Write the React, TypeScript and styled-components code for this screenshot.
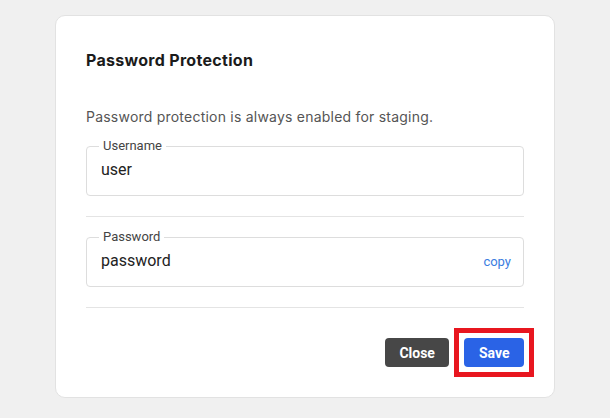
import React from "react";
import styled, { createGlobalStyle } from "styled-components";

const GlobalStyle = createGlobalStyle`
  * { box-sizing: border-box; }
  html, body {
    margin: 0;
    padding: 0;
    background: #f0f0f0;
    font-family: Roboto, "Noto Sans", Arial, sans-serif;
  }
`;

const Page = styled.div`
  padding: 15px 0 0 55px;
`;

const Card = styled.div`
  width: 500px;
  background: #ffffff;
  border: 1px solid #e2e2e2;
  border-radius: 10px;
  padding: 30px;
  display: flex;
  flex-direction: column;
`;

const Title = styled.h2`
  margin: 0;
  font-family: Inter, Roboto, sans-serif;
  font-size: 16px;
  line-height: 28px;
  font-weight: 700;
  letter-spacing: 0.3px;
  color: #1b1b1b;
`;

const Description = styled.p`
  margin: 33px 0 0;
  font-family: Inter, Roboto, sans-serif;
  font-size: 14px;
  line-height: 20px;
  letter-spacing: 0.22px;
  color: #555555;
`;

const Field = styled.fieldset<{ $first?: boolean }>`
  margin: ${(p) => (p.$first ? "12px" : "13px")} 0 0;
  padding: 0 12px 15px 14px;
  border: 1px solid #dddddd;
  border-radius: 4px;
  min-width: 0;
`;

const Legend = styled.legend`
  padding: 0 4px;
  margin-left: -2px;
  font-size: 13px;
  line-height: 14px;
  color: #444444;
`;

const ValueRow = styled.div`
  display: flex;
  align-items: baseline;
  justify-content: space-between;
  margin-top: 7px;
`;

const Value = styled.span`
  font-size: 16px;
  line-height: 20px;
  color: #222222;
`;

const CopyLink = styled.a`
  font-size: 13px;
  color: #3b7ddf;
  text-decoration: none;
  cursor: pointer;
`;

const Divider = styled.hr`
  margin: 20px 0 0;
  border: none;
  border-top: 1px solid #e4e4e4;
  height: 0;
`;

const Actions = styled.div`
  display: flex;
  justify-content: flex-end;
  gap: 15px;
  margin-top: 30px;
`;

const Button = styled.button<{ $variant: "dark" | "primary"; $highlight?: boolean }>`
  position: relative;
  height: 29px;
  padding: 0 14.5px;
  border: none;
  border-radius: 4px;
  font-family: Roboto, Arial, sans-serif;
  font-size: 14px;
  font-weight: 700;
  color: #ffffff;
  background: ${(p) => (p.$variant === "primary" ? "#2a63e6" : "#474747")};
  cursor: pointer;

  &::after {
    content: "";
    display: ${(p) => (p.$highlight ? "block" : "none")};
    position: absolute;
    inset: -10px;
    border: 5px solid #e8161f;
    pointer-events: none;
  }
`;

export default function App() {
  return (
    <>
      <GlobalStyle />
      <Page>
        <Card>
          <Title>Password Protection</Title>
          <Description>Password protection is always enabled for staging.</Description>
          <Field $first>
            <Legend>Username</Legend>
            <ValueRow>
              <Value>user</Value>
            </ValueRow>
          </Field>
          <Divider />
          <Field>
            <Legend>Password</Legend>
            <ValueRow>
              <Value>password</Value>
              <CopyLink>copy</CopyLink>
            </ValueRow>
          </Field>
          <Divider />
          <Actions>
            <Button $variant="dark">Close</Button>
            <Button $variant="primary" $highlight>
              Save
            </Button>
          </Actions>
        </Card>
      </Page>
    </>
  );
}
